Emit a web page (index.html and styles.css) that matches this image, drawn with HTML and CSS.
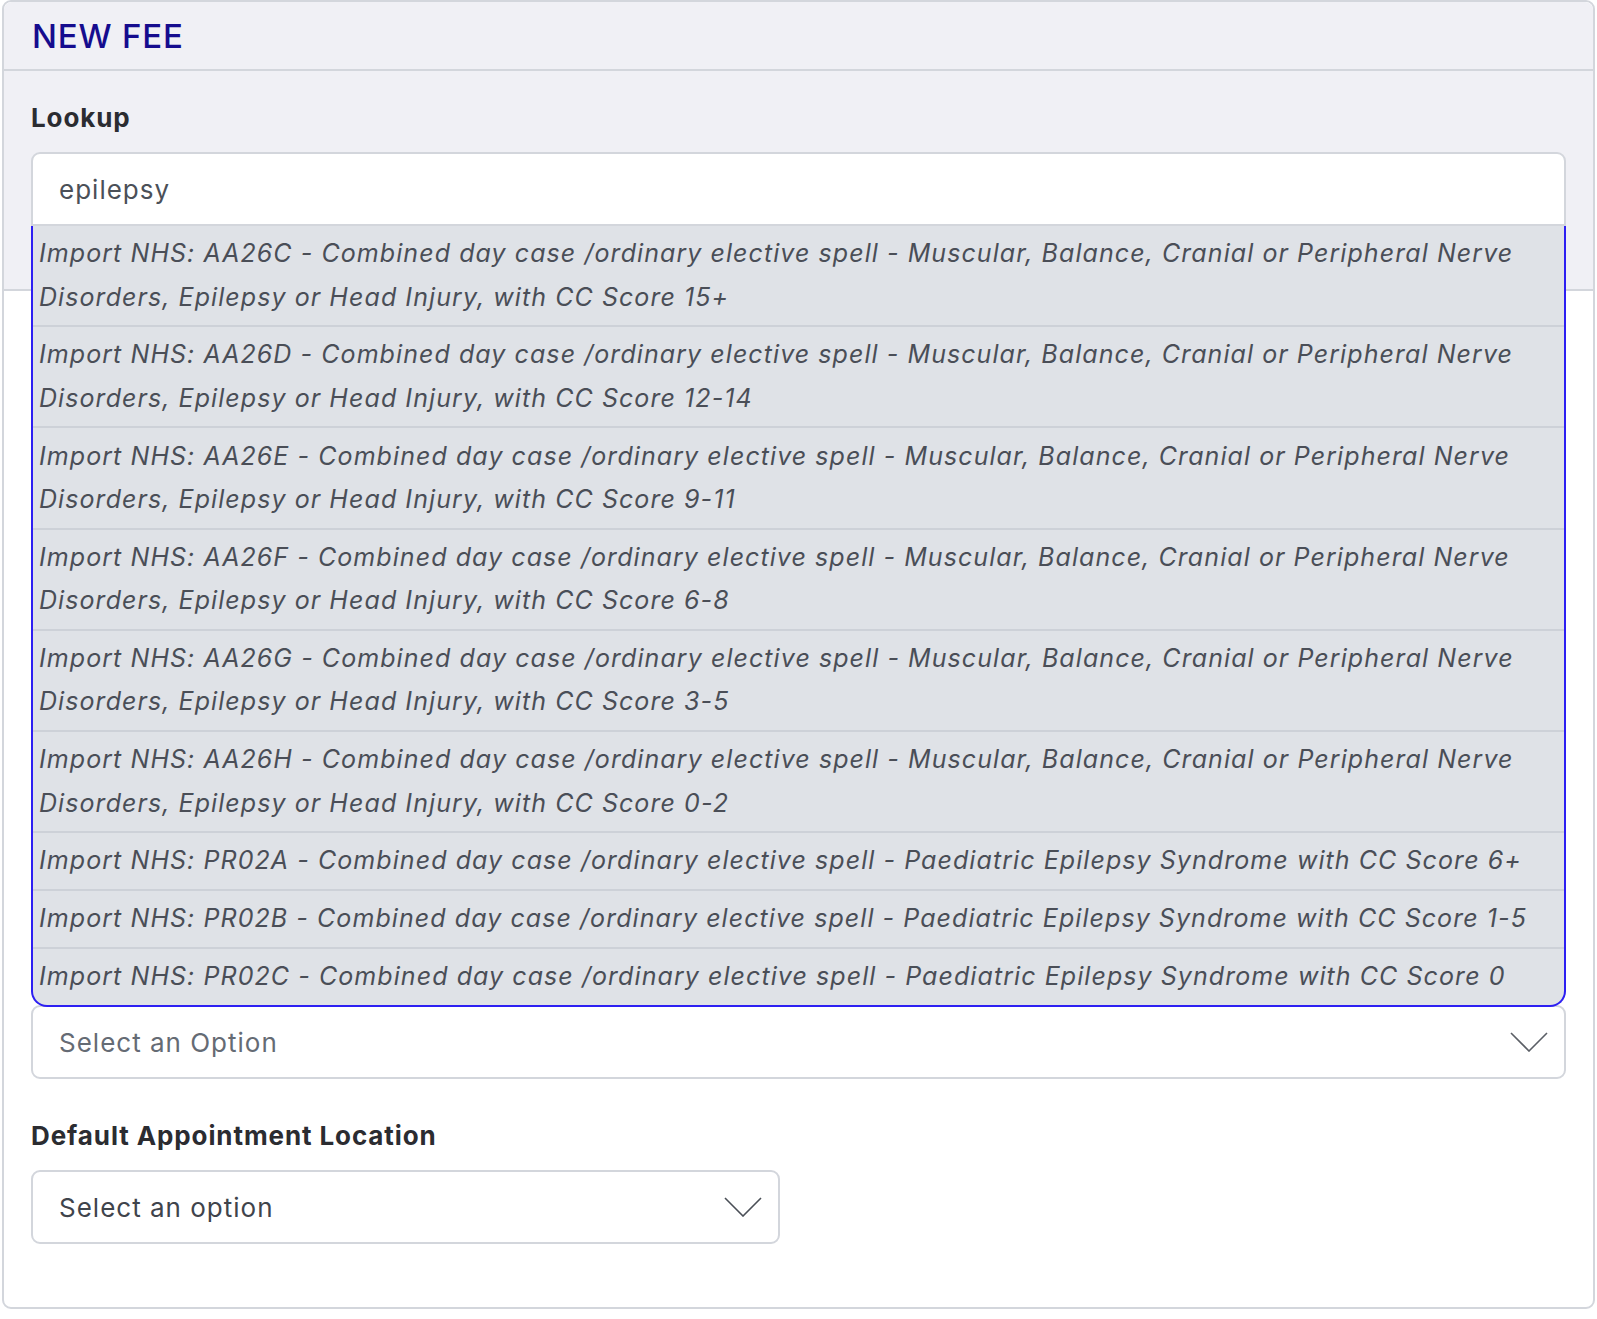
FILE: index.html
```html
<!DOCTYPE html>
<html>
<head>
  <title>New Fee</title>
  <link rel="stylesheet" href="styles.css">
</head>
<body>
  <div class="card">
    <div class="card-header">
      <h1>NEW FEE</h1>
    </div>

    <div class="lookup-section">
      <label class="field-label" for="lookup-input">Lookup</label>
      <div class="lookup-wrap">
        <input id="lookup-input" class="lookup-input" type="text" value="epilepsy">
        <ul class="results">
          <li>Import NHS: AA26C - Combined day case /ordinary elective spell - Muscular, Balance, Cranial or Peripheral Nerve Disorders, Epilepsy or Head Injury, with CC Score 15+</li>
          <li>Import NHS: AA26D - Combined day case /ordinary elective spell - Muscular, Balance, Cranial or Peripheral Nerve Disorders, Epilepsy or Head Injury, with CC Score 12-14</li>
          <li>Import NHS: AA26E - Combined day case /ordinary elective spell - Muscular, Balance, Cranial or Peripheral Nerve Disorders, Epilepsy or Head Injury, with CC Score 9-11</li>
          <li>Import NHS: AA26F - Combined day case /ordinary elective spell - Muscular, Balance, Cranial or Peripheral Nerve Disorders, Epilepsy or Head Injury, with CC Score 6-8</li>
          <li>Import NHS: AA26G - Combined day case /ordinary elective spell - Muscular, Balance, Cranial or Peripheral Nerve Disorders, Epilepsy or Head Injury, with CC Score 3-5</li>
          <li>Import NHS: AA26H - Combined day case /ordinary elective spell - Muscular, Balance, Cranial or Peripheral Nerve Disorders, Epilepsy or Head Injury, with CC Score 0-2</li>
          <li>Import NHS: PR02A - Combined day case /ordinary elective spell - Paediatric Epilepsy Syndrome with CC Score 6+</li>
          <li>Import NHS: PR02B - Combined day case /ordinary elective spell - Paediatric Epilepsy Syndrome with CC Score 1-5</li>
          <li>Import NHS: PR02C - Combined day case /ordinary elective spell - Paediatric Epilepsy Syndrome with CC Score 0</li>
        </ul>
      </div>
    </div>

    <div class="card-body">
      <div class="field">
        <div class="select-box">
          <span class="placeholder">Select an Option</span>
          <svg class="chevron" width="38" height="20" viewBox="0 0 38 20"><polyline points="1,1 19,19 37,1" fill="none" stroke="#5b5f66" stroke-width="1.6"/></svg>
        </div>
      </div>

      <div class="field-row">
        <div class="field">
          <label class="field-label">Default Appointment Location</label>
          <div class="select-box">
            <span class="value">Select an option</span>
            <svg class="chevron" width="38" height="20" viewBox="0 0 38 20"><polyline points="1,1 19,19 37,1" fill="none" stroke="#4a4f57" stroke-width="1.6"/></svg>
          </div>
        </div>
        <div></div>
      </div>
    </div>
  </div>
</body>
</html>
```

FILE: styles.css
```css
body {
  margin: 0;
  background-color: #fff;
  font-family: Inter, "Noto Sans", sans-serif;
  letter-spacing: 1px;
  color: #4b5058;
}

.card {
  margin: 0 2px;
  border: 2px solid #d3d6dc;
  border-radius: 9px;
}

.card-header {
  background-color: #f0f0f5;
  border-bottom: 2px solid #d3d6dc;
  border-radius: 8px 8px 0 0;
  height: 67px;
  padding: 0 28px;
  display: flex;
  align-items: center;
}

.card-header h1 {
  margin: 0;
  font-size: 33px;
  font-weight: 500;
  letter-spacing: 0.8px;
  color: #150c8e;
}

.lookup-section {
  background-color: #f0f0f5;
  border-bottom: 2px solid #d3d6dc;
  padding: 31px 27px 63px;
}

.field-label {
  display: block;
  font-size: 26px;
  font-weight: 700;
  line-height: 32px;
  letter-spacing: 0.9px;
  color: #2b2c31;
  margin-bottom: 18px;
}

.lookup-wrap {
  position: relative;
}

.lookup-input {
  display: block;
  box-sizing: border-box;
  width: 100%;
  height: 74px;
  padding: 0 26px;
  border: 2px solid #d3d6dc;
  border-radius: 9px 9px 0 0;
  background-color: #fff;
  font-family: inherit;
  font-size: 26px;
  letter-spacing: 1px;
  color: #4b5058;
  outline: none;
}

.results {
  position: absolute;
  top: 100%;
  left: 0;
  right: 0;
  margin: 0;
  padding: 0;
  list-style: none;
  background-color: #dfe2e7;
  border: 2px solid #2d1ff2;
  border-top: none;
  border-radius: 0 0 16px 16px;
  z-index: 10;
}

.results li {
  padding: 6.3px 6px;
  font-size: 25px;
  font-style: italic;
  line-height: 43.3px;
  letter-spacing: 1.07px;
  color: #4a4e57;
  border-bottom: 2px solid #cdd1d8;
}

.results li:last-child {
  border-bottom: none;
}

.card-body {
  padding: 714px 27px 63px;
}

.field {
  margin-bottom: 41px;
}

.field-row {
  display: grid;
  grid-template-columns: 1fr 1fr;
  gap: 37px;
}

.field-row .field {
  margin-bottom: 0;
}

.select-box {
  box-sizing: border-box;
  height: 74px;
  border: 2px solid #d3d6dc;
  border-radius: 9px;
  background-color: #fff;
  padding: 0 16px 0 26px;
  display: flex;
  align-items: center;
  justify-content: space-between;
  font-size: 26px;
}

.placeholder {
  color: #656b74;
}

.value {
  color: #3f444c;
}

.chevron {
  display: block;
}
```
